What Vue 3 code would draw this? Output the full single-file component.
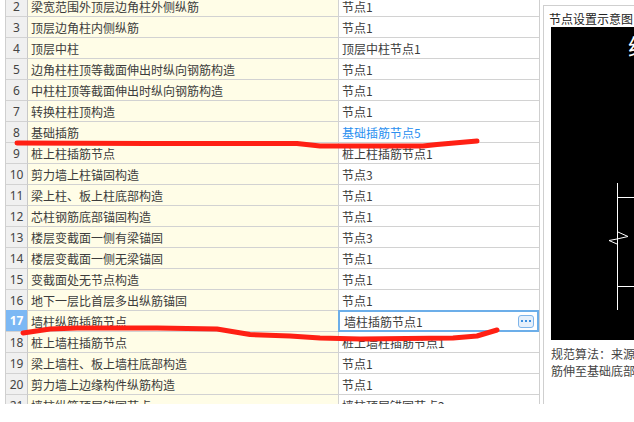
<script setup>
const rows = [
  [2, '梁宽范围外顶层边角柱外侧纵筋', '节点1'],
  [3, '顶层边角柱内侧纵筋', '节点1'],
  [4, '顶层中柱', '顶层中柱节点1'],
  [5, '边角柱柱顶等截面伸出时纵向钢筋构造', '节点1'],
  [6, '中柱柱顶等截面伸出时纵向钢筋构造', '节点1'],
  [7, '转换柱柱顶构造', '节点1'],
  [8, '基础插筋', '基础插筋节点5'],
  [9, '桩上柱插筋节点', '桩上柱插筋节点1'],
  [10, '剪力墙上柱锚固构造', '节点3'],
  [11, '梁上柱、板上柱底部构造', '节点1'],
  [12, '芯柱钢筋底部锚固构造', '节点1'],
  [13, '楼层变截面一侧有梁锚固', '节点3'],
  [14, '楼层变截面一侧无梁锚固', '节点1'],
  [15, '变截面处无节点构造', '节点1'],
  [16, '地下一层比首层多出纵筋锚固', '节点1'],
  [17, '墙柱纵筋插筋节点', '墙柱插筋节点1'],
  [18, '桩上墙柱插筋节点', '桩上墙柱插筋节点1'],
  [19, '梁上墙柱、板上墙柱底部构造', '节点1'],
  [20, '剪力墙上边缘构件纵筋构造', '节点1'],
  [21, '墙柱纵筋顶层锚固节点', '墙柱顶层锚固节点2'],
]
</script>

<template>
  <div class="screen">
    <div class="table">
      <div v-for="r in rows" :key="r[0]" class="row">
        <div class="num" :class="{ active: r[0] === 17 }">{{ r[0] }}</div>
        <div class="name">{{ r[1] }}</div>
        <div class="value" :class="{ link: r[0] === 8 }">
          <template v-if="r[0] !== 17">{{ r[2] }}</template>
          <div v-else class="editor">
            <span>{{ r[2] }}</span>
            <button class="more" type="button" aria-label="更多">
              <i></i><i></i><i></i>
            </button>
          </div>
        </div>
      </div>
    </div>

    <div class="panel">
      <div class="title">节点设置示意图</div>
      <div class="canvas">
        <span class="glyph">纵</span>
        <svg class="drawing" viewBox="0 0 83 313" width="83" height="313">
          <path d="M66.5 156V283M66.5 170.5H83M66.5 259.5H83" fill="none" stroke="#fff" stroke-width="1" />
          <path d="M67 205L77 209.500L66 212L58 213.500L66 217" fill="none" stroke="#fff" stroke-width="1" />
        </svg>
      </div>
      <p class="note">规范算法：来源<br />筋伸至基础底部</p>
    </div>

    <svg class="ink" viewBox="0 0 634 422" width="634" height="422">
      <path d="M17 143L148 143.500L257 143.500L297 143.500L320 146L343 146L423 146L437 144.500L477 141" />
      <path d="M23 333L50 329L77 328L157 328L217 329L250 334.500L290 336L320 338L360 339L453 338L477 336L497 330" />
    </svg>
  </div>
</template>

<style>
html, body {
  margin: 0;
  background: #fff;
  overflow: hidden;
}
</style>

<style scoped>
.screen {
  position: relative;
  display: flex;
  width: 629px;
  height: 404px;
  margin-left: 5px;
  overflow: visible;
  font-family: "Noto Sans CJK SC", "Noto Sans", sans-serif;
  font-size: 12px;
  color: #3c3c3c;
}
.screen::after {
  content: "";
  position: absolute;
  left: 0;
  right: 0;
  top: 404px;
  height: 1px;
  background: #c8c8c8;
}
.table {
  flex: none;
  width: 533px;
  height: 404px;
  border-left: 1px solid #cfcfcf;
  border-right: 1px solid #cfcfcf;
  overflow: hidden;
}
.row {
  display: grid;
  grid-template-columns: 22px 311px 200px;
  height: 21px;
  box-sizing: border-box;
  line-height: 21px;
}
.row:first-child {
  margin-top: -4px;
}
.num,
.name,
.value {
  box-sizing: border-box;
  height: 21px;
  border-bottom: 1px solid #d2d2d2;
  border-right: 1px solid #d2d2d2;
  white-space: nowrap;
}
.num {
  background: #f0f0f0;
  text-align: center;
  font-family: "Noto Sans", sans-serif;
  font-size: 12px;
  color: #444;
  border-right-color: #c8c8c8;
}
.num.active {
  margin-top: -1px;
  height: 22px;
  line-height: 22px;
  background: #7cb8f4;
  color: #fff;
  font-weight: 700;
}
.name {
  background: #fffde7;
  padding-left: 3px;
}
.value {
  position: relative;
  background: #fff;
  padding-left: 3px;
  border-right: none;
}
.value.link {
  color: #2a8ff0;
}
.editor {
  position: absolute;
  top: -1px;
  left: -1px;
  right: 0;
  bottom: -1px;
  display: flex;
  align-items: center;
  justify-content: space-between;
  box-sizing: border-box;
  padding: 0 3px 0 4px;
  background: #fff;
  border: 2px solid #6caee9;
}
.more {
  display: flex;
  align-items: center;
  justify-content: center;
  gap: 2px;
  width: 16px;
  height: 13px;
  padding: 0;
  background: #e6f0fb;
  border: 1px solid #7fb5ea;
  border-radius: 3px;
}
.more i {
  width: 2px;
  height: 2px;
  background: #3c8fe0;
}
.panel {
  flex: none;
  width: 91px;
  height: 399px;
  margin: 5px 0 0 3px;
  box-sizing: border-box;
  border-top: 1px solid #cfcfcf;
  border-left: 1px solid #cfcfcf;
  overflow: hidden;
}
.title {
  height: 21px;
  padding-left: 5px;
  line-height: 25px;
  color: #222;
  white-space: nowrap;
}
.canvas {
  position: relative;
  width: 83px;
  height: 313px;
  margin-left: 7px;
  background: #000;
  overflow: hidden;
}
.glyph {
  position: absolute;
  left: 77px;
  top: 4px;
  font-size: 24px;
  line-height: 30px;
  color: #fff;
}
.drawing {
  position: absolute;
  left: 0;
  top: 0;
}
.note {
  margin: 5px 0 0 7px;
  width: 90px;
  line-height: 17px;
  white-space: nowrap;
  overflow: hidden;
  color: #444;
}
.ink {
  position: absolute;
  left: -5px;
  top: 0;
  pointer-events: none;
}
.ink path {
  fill: none;
  stroke: #ff2014;
  stroke-width: 5;
  stroke-linecap: round;
  stroke-linejoin: round;
}
</style>
